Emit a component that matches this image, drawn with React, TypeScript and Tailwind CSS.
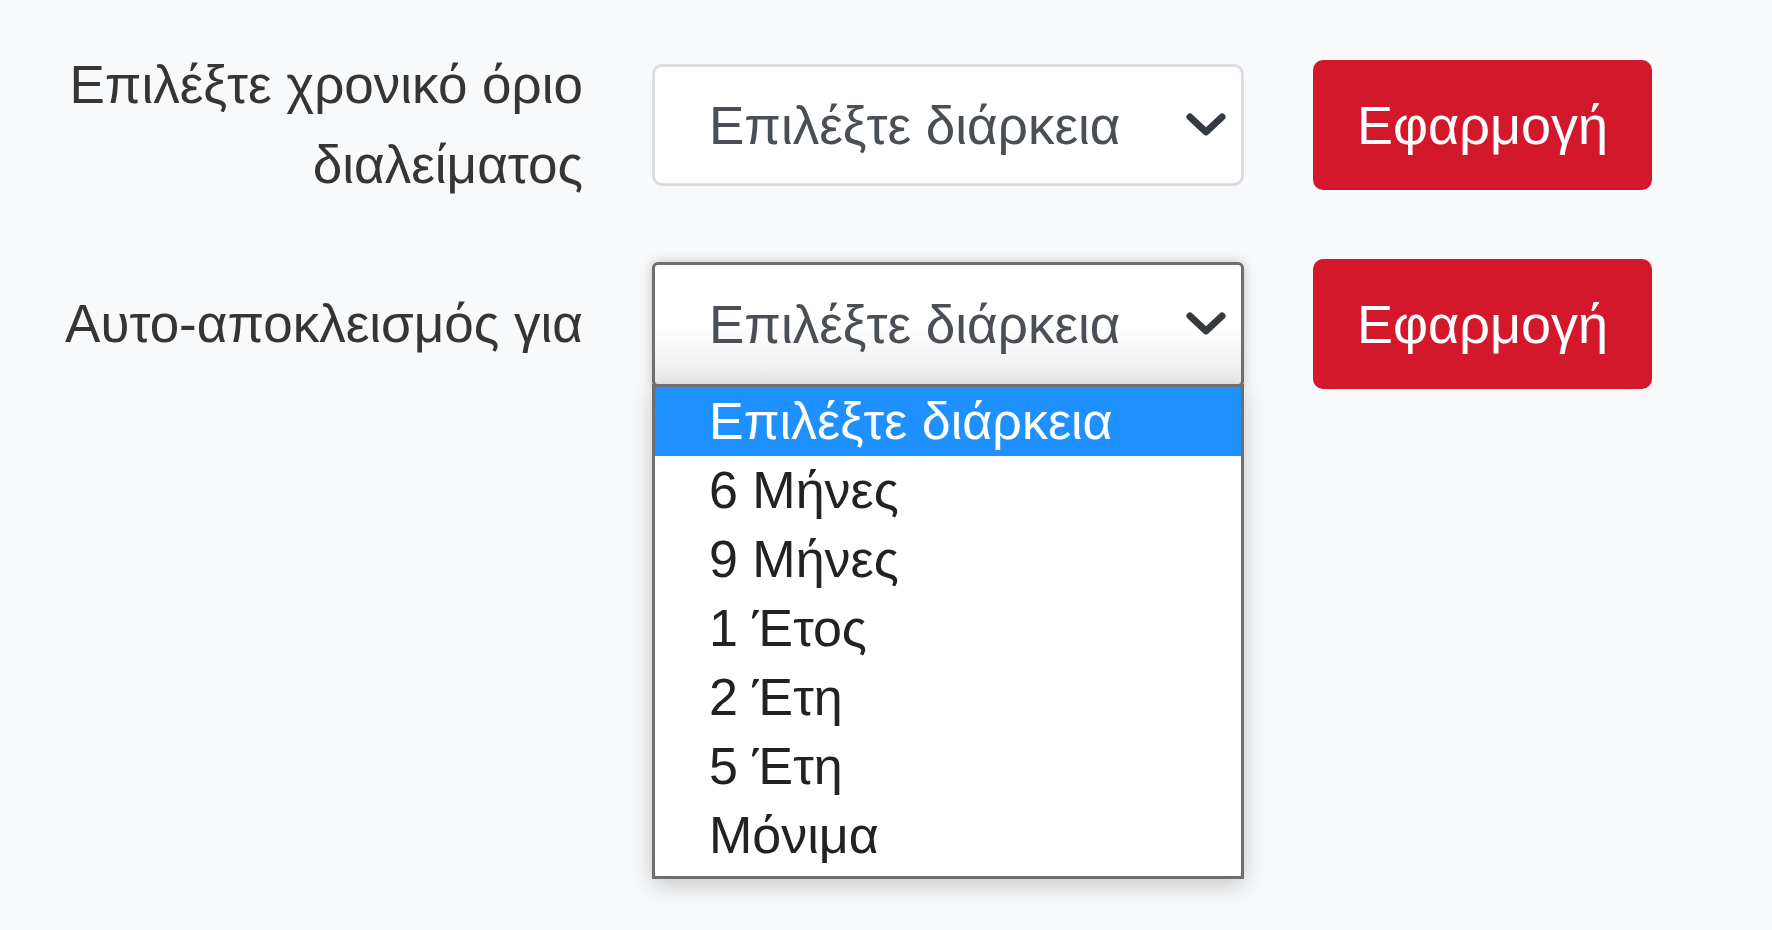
// Self-exclusion settings form, with the duration dropdown shown open

const durations = ['Επιλέξτε διάρκεια', '6 Μήνες', '9 Μήνες', '1 Έτος', '2 Έτη', '5 Έτη', 'Μόνιμα'];

function Chevron() {
  return (
    <svg width="42" height="28" viewBox="0 0 42 28" fill="none" className="shrink-0">
      <polyline
        points="5,6 21,21 37,6"
        stroke="#343a40"
        strokeWidth="7"
        strokeLinecap="round"
        strokeLinejoin="round"
      />
    </svg>
  );
}

interface SelectBoxProps {
  open?: boolean;
}

function SelectBox({ open = false }: SelectBoxProps) {
  return (
    <div className="relative">
      <div
        className={`flex items-center justify-between pl-[54px] pr-[14px] ${
          open
            ? 'h-[125px] rounded-[6px] border-[3px] border-[#6f6f6f] bg-gradient-to-b from-white via-white to-[#ebebeb] shadow-[0_0_12px_rgba(0,0,0,0.22)]'
            : 'h-[122px] rounded-[10px] border-[3px] border-[#dadde1] bg-white'
        }`}
      >
        <span className="text-[53px] leading-none text-[#4a4f55]">Επιλέξτε διάρκεια</span>
        <Chevron />
      </div>

      {open && (
        <div className="absolute left-0 right-0 top-[calc(100%-3px)] z-10 border-[3px] border-[#6f6f6f] bg-white pb-[6px] shadow-[0_6px_22px_rgba(0,0,0,0.2)]">
          {durations.map((d, i) => (
            <div
              key={d}
              className={`flex h-[69px] items-center pl-[54px] text-[52px] leading-none ${
                i === 0 ? 'bg-[#1e90ff] text-white' : 'text-[#222]'
              }`}
            >
              {d}
            </div>
          ))}
        </div>
      )}
    </div>
  );
}

function ApplyButton() {
  return (
    <button className="flex h-[130px] items-center justify-center rounded-[10px] bg-[#d3182c] text-[54px] leading-none text-white">
      Εφαρμογή
    </button>
  );
}

export default function App() {
  return (
    <div
      className="min-h-screen w-full bg-[#f8f9fa] pt-[45px]"
      style={{ fontFamily: '"Liberation Sans", Arial, sans-serif' }}
    >
      <div className="grid grid-cols-[583px_592px_339px] items-center gap-x-[69px] gap-y-[54px]">
        <label className="text-right text-[53px] leading-[80px] text-[#353535]">
          Επιλέξτε χρονικό όριο διαλείματος
        </label>
        <SelectBox />
        <ApplyButton />

        <label className="text-right text-[53px] leading-[80px] text-[#353535]">
          Αυτο-αποκλεισμός για
        </label>
        <SelectBox open />
        <ApplyButton />
      </div>
    </div>
  );
}
